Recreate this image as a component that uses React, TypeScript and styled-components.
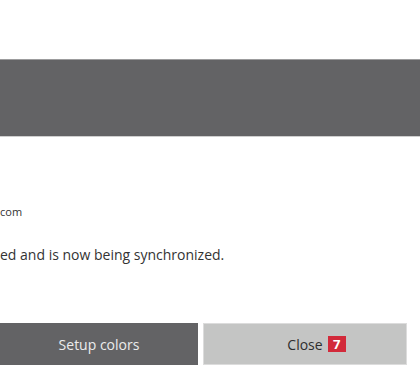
import React from "react";
import styled, { createGlobalStyle } from "styled-components";

const Global = createGlobalStyle`
  html, body { margin: 0; padding: 0; background: #ffffff; }
  body { font-family: "Open Sans", "Noto Sans", sans-serif; overflow: hidden; }
`;

const Page = styled.div`
  width: 420px;
  height: 392px;
  display: flex;
  flex-direction: column;
  padding-top: 59px;
  box-sizing: border-box;
`;

const Header = styled.div`
  height: 76px;
  background: #636365;
  border-top: 1px solid #9c9c9d;
  border-bottom: 1px solid #cfcfcf;
`;

const Body = styled.div`
  display: flex;
  flex-direction: column;
  padding-top: 67px;
`;

const SmallLine = styled.div`
  font-size: 11px;
  line-height: 16px;
  color: #333333;
`;

const TextLine = styled.div`
  margin-top: 26px;
  font-size: 14px;
  line-height: 18px;
  color: #333333;
`;

const Buttons = styled.div`
  display: flex;
  gap: 5px;
  margin-top: 59px;
`;

const Button = styled.button<{ $primary?: boolean }>`
  width: ${(p) => (p.$primary ? "198px" : "204px")};
  height: 42px;
  display: flex;
  align-items: center;
  justify-content: center;
  font-family: "Open Sans", "Noto Sans", sans-serif;
  font-size: 14px;
  border: 1px solid ${(p) => (p.$primary ? "#636365" : "#dcdcdc")};
  background: ${(p) => (p.$primary ? "#636365" : "#c4c5c4")};
  color: ${(p) => (p.$primary ? "#ececec" : "#2e2e2e")};
  padding: 0;
  cursor: pointer;
`;

const Label = styled.span`
  position: relative;
  display: inline-block;
`;

const Badge = styled.span`
  position: absolute;
  left: calc(100% + 5px);
  top: 50%;
  transform: translateY(-50%);
  display: inline-flex;
  align-items: center;
  justify-content: center;
  width: 18px;
  height: 16px;
  background: #d22a3a;
  color: #ffffff;
  font-weight: 700;
  font-size: 13px;
  line-height: 16px;
`;

export default function App() {
  return (
    <>
      <Global />
      <Page>
        <Header />
        <Body>
          <SmallLine>com</SmallLine>
          <TextLine>ed and is now being synchronized.</TextLine>
        </Body>
        <Buttons>
          <Button $primary>Setup colors</Button>
          <Button>
            <Label>
              Close
              <Badge>7</Badge>
            </Label>
          </Button>
        </Buttons>
      </Page>
    </>
  );
}
